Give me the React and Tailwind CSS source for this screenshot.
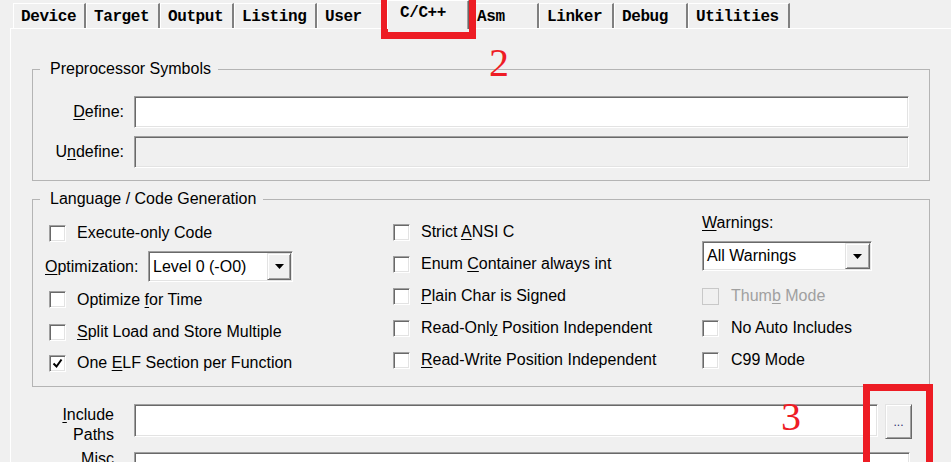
import React from "react";

const sunken =
  "border border-t-[#a0a0a0] border-l-[#a0a0a0] border-r-white border-b-white shadow-[inset_1px_1px_0_#696969,inset_-1px_-1px_0_#e3e3e3]";
const raised =
  "border border-t-[#e3e3e3] border-l-[#e3e3e3] border-r-[#696969] border-b-[#696969] shadow-[inset_1px_1px_0_#ffffff,inset_-1px_-1px_0_#a0a0a0] bg-[#f0f0f0]";

const tabs = [
  { name: "Device", w: "w-[73px]" },
  { name: "Target", w: "w-[74px]" },
  { name: "Output", w: "w-[74px]" },
  { name: "Listing", w: "w-[83px]" },
  { name: "User", w: "w-[70px]" },
  { name: "C/C++", w: "w-[82px]", active: true },
  { name: "Asm", w: "w-[70px]" },
  { name: "Linker", w: "w-[75px]" },
  { name: "Debug", w: "w-[74px]" },
  { name: "Utilities", w: "w-[102px]" },
];

const U = ({ children }) => <span className="underline underline-offset-[2px]">{children}</span>;

const Arrow = () => (
  <svg width="9" height="5" viewBox="0 0 9 5">
    <path d="M0 0h9L4.5 5z" fill="#000" />
  </svg>
);

const Check = ({ children, checked, disabled, gap = "ml-[11px]" }) => (
  <div className="flex items-center">
    <div
      className={`flex h-[17px] w-[17px] items-center justify-center ${
        disabled
          ? "border border-[#c8c8c8] bg-[#f0f0f0]"
          : sunken + " bg-white"
      }`}
    >
      {checked && (
        <svg width="11" height="11" viewBox="0 0 11 11">
          <path d="M1.5 5.5l3 3 5-7" fill="none" stroke="#000" strokeWidth="2" />
        </svg>
      )}
    </div>
    <span className={`${gap} ${disabled ? "text-[#a0a0a0]" : "text-black"}`}>{children}</span>
  </div>
);

const Combo = ({ w, h, text, btnW }) => (
  <div className={`flex ${w} ${h} items-stretch bg-white p-[1px] ${sunken}`}>
    <span className="flex flex-1 items-center pl-[3px]">{text}</span>
    <div className={`flex ${btnW} items-center justify-center ${raised}`}>
      <Arrow />
    </div>
  </div>
);

export default function App() {
  return (
    <div className="relative h-[462px] w-[951px] overflow-hidden bg-[#f0f0f0] font-['Liberation_Sans',Arial,sans-serif] text-[16px] leading-[18px] text-black">
      {/* tab strip */}
      <div className="flex h-[28px] items-end pl-[13px] font-['Liberation_Mono',monospace] text-[16px] font-bold tracking-[-0.4px]">
        {tabs.map((t) =>
          t.active ? (
            <div
              key={t.name}
              className={`relative z-10 mb-[-1px] h-[29px] ${t.w} border-l border-t border-l-white border-t-white border-r border-r-[#696969] bg-[#f0f0f0] pl-[12px] pt-[3px] shadow-[inset_-1px_0_0_#a0a0a0]`}
            >
              {t.name}
            </div>
          ) : (
            <div
              key={t.name}
              className={`h-[25px] ${t.w} border-l border-t border-l-white border-t-white border-r-2 border-r-[#808080] pl-[7px] pt-[4px]`}
            >
              {t.name}
            </div>
          )
        )}
      </div>

      {/* page */}
      <div className="ml-[10px] h-[440px] w-[960px] border-l border-t border-white pl-[21px] pt-[31px]">
        <fieldset className="w-[898px] border border-[#b4b4b4] pb-[12px] pr-[20px]">
          <legend className="ml-[7px] pl-[10px] pr-[7px] leading-[18px]">Preprocessor Symbols</legend>
          <div className="flex flex-col gap-[8px] pt-[18px]">
            <div className="flex h-[32px] items-center gap-[10px]">
              <span className="w-[91px] text-right">
                <U>D</U>efine:
              </span>
              <div className={`h-[32px] flex-1 bg-white ${sunken}`} />
            </div>
            <div className="flex h-[32px] items-center gap-[10px]">
              <span className="w-[91px] text-right">
                U<U>n</U>define:
              </span>
              <div className={`h-[32px] flex-1 bg-[#f0f0f0] ${sunken}`} />
            </div>
          </div>
        </fieldset>

        <fieldset className="mt-[9px] w-[898px] border border-[#b4b4b4] pl-[12px]">
          <legend className="ml-[-5px] pl-[10px] pr-[7px] leading-[18px]">Language / Code Generation</legend>
          <div className="flex h-[178px] pt-[6px]">
            <div className="flex w-[348px] flex-col pt-[2px]">
              <div className="flex h-[34px] items-center pl-[4px]">
                <Check>Execute-only Code</Check>
              </div>
              <div className="flex h-[33px] items-center">
                <span className="w-[103px]">
                  <U>O</U>ptimization:
                </span>
                <Combo w="w-[145px]" h="h-[31px]" btnW="w-[24px]" text="Level 0 (-O0)" />
              </div>
              <div className="flex h-[33px] items-center pl-[4px]">
                <Check>
                  Optimize <U>f</U>or Time
                </Check>
              </div>
              <div className="flex h-[32px] items-center pl-[4px]">
                <Check>
                  <U>S</U>plit Load and Store Multiple
                </Check>
              </div>
              <div className="flex h-[30px] items-center pl-[4px]">
                <Check checked>
                  One <U>E</U>LF Section per Function
                </Check>
              </div>
            </div>

            <div className="flex w-[309px] flex-col pt-[2px]">
              <div className="flex h-[32px] items-center">
                <Check>
                  Strict <U>A</U>NSI C
                </Check>
              </div>
              <div className="flex h-[32px] items-center">
                <Check>
                  Enum <U>C</U>ontainer always int
                </Check>
              </div>
              <div className="flex h-[32px] items-center">
                <Check>
                  <U>P</U>lain Char is Signed
                </Check>
              </div>
              <div className="flex h-[32px] items-center">
                <Check>
                  Read-Onl<U>y</U> Position Independent
                </Check>
              </div>
              <div className="flex h-[32px] items-center">
                <Check>
                  <U>R</U>ead-Write Position Independent
                </Check>
              </div>
            </div>

            <div className="flex flex-col">
              <span className="h-[18px]">
                <U>W</U>arnings:
              </span>
              <div className="mt-[9px]">
                <Combo w="w-[170px]" h="h-[30px]" btnW="w-[25px]" text="All Warnings" />
              </div>
              <div className="mt-[9px] flex h-[32px] items-center">
                <Check disabled gap="ml-[12px]">
                  Thum<U>b</U> Mode
                </Check>
              </div>
              <div className="flex h-[32px] items-center">
                <Check gap="ml-[12px]">No Auto Includes</Check>
              </div>
              <div className="flex h-[32px] items-center">
                <Check gap="ml-[12px]">C99 Mode</Check>
              </div>
            </div>
          </div>
        </fieldset>

        {/* include / misc rows */}
        <div className="ml-[-21px] mt-[17px] flex flex-col">
          <div className="flex h-[41px] items-start">
            <span className="mt-[1px] w-[103px] text-right leading-[20px]">
              <U>I</U>nclude
              <br />
              Paths
            </span>
            <div className={`ml-[20px] h-[33px] w-[744px] bg-white ${sunken}`} />
            <div className={`ml-[7px] flex h-[35px] w-[27px] items-center justify-center text-[12px] text-[#303070] ${raised}`}>
              ...
            </div>
          </div>
          <div className="mt-[7px] flex items-start">
            <span className="mt-[-3px] w-[103px] text-right leading-[20px]">Misc</span>
            <div className={`ml-[20px] h-[33px] w-[776px] bg-white ${sunken}`} />
          </div>
        </div>
      </div>

      {/* red annotations */}
      <div className="pointer-events-none absolute left-[381px] top-[-10px] h-[49px] w-[95px] border-[7px] border-[#ed1c24]" />
      <div className="pointer-events-none absolute left-[863px] top-[384px] h-[100px] w-[70px] border-[7px] border-[#ed1c24]" />
      <span className="absolute left-[489px] top-[43px] font-['Liberation_Serif',serif] text-[40px] leading-[40px] text-[#ee1c25]">
        2
      </span>
      <span className="absolute left-[781px] top-[397px] font-['Liberation_Serif',serif] text-[40px] leading-[40px] text-[#ee1c25]">
        3
      </span>
    </div>
  );
}
